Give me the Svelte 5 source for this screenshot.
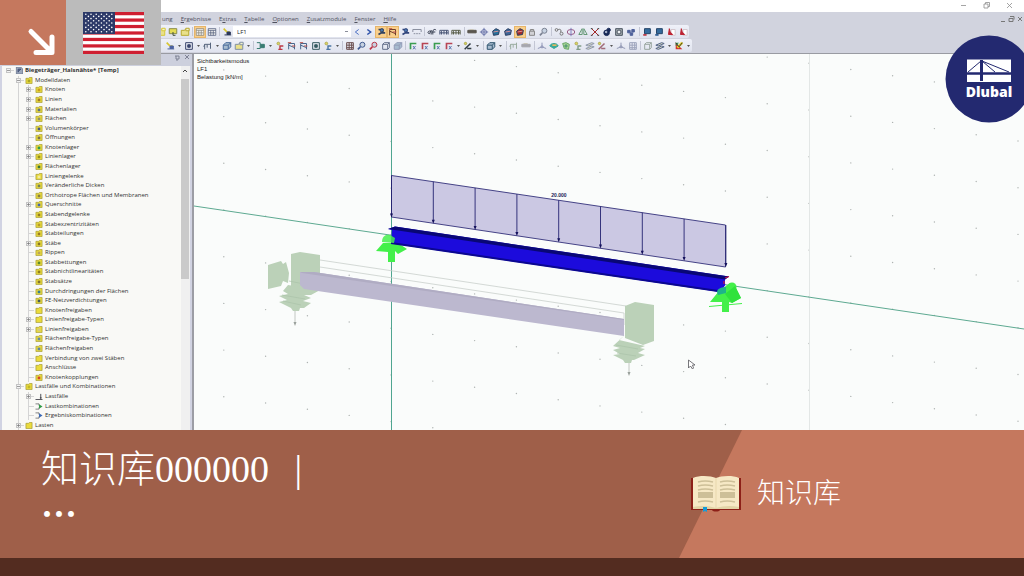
<script lang="ts">
	type Tool = { kind: string; color?: string; active?: boolean; label?: string };
	type Entry = Tool | 'caret' | 'sep' | 'gap' | 'combo';

	const t = (kind: string, color = '#4d5878', active = false): Tool => ({ kind, color, active });

	const menus = ['ung', 'Ergebnisse', 'Extras', 'Tabelle', 'Optionen', 'Zusatzmodule', 'Fenster', 'Hilfe'];

	const standardBar: Entry[] = [
		t('folder', '#d7c93a'), t('note'), t('folder', '#b9a92f'), 'sep',
		t('table', '#8a8578', true), t('table'), 'sep',
		t('load', '#2b3658'), 'combo',
		t('prev', '#4a6fc4'), t('next', '#2c50a8'),
		t('member', '#33425f', true), t('frame', '#6c3d2a', true), t('member', '#31457c'), t('values', '#8b90a0'), 'sep',
		t('curve', '#3b4254'), t('bridge'), t('bridge', '#5b604c'), 'gap',
		t('bar', '#5a564e'), t('target', '#6d77ab'), t('solid', '#27719b'), t('solid', '#3a6599'),
		t('solid', '#a32a2a', true), t('lock', '#888'), t('zoom', '#7b8292'), 'sep',
		t('link', '#777'), t('ring', '#9a5c86'), t('mirror', '#697'), t('cross', '#a32828'),
		t('ball', '#182957'), t('gear', '#4c5662'), t('cluster', '#50629b'), 'gap',
		t('screen', '#b62f3c'), t('screen', '#24558f'), t('flag', '#bd2433'), t('flag', '#bd2433')
	];

	const viewBar: Entry[] = [
		t('load', '#4c62a0'), 'caret', t('square', '#3b466e'), 'caret', t('beam', '#57657d'), 'caret',
		t('cube', '#486a9b'), t('folder', '#8090a6'), 'caret', 'sep',
		t('combine', '#397c72'), 'caret', t('pin', '#bd3744'), t('frame', '#48668c'), t('frame', '#48668c'),
		t('square', '#355a60'), t('pin', '#4a75a3'), 'caret', 'sep',
		t('mesh', '#6b4f4f'), t('zoom', '#405a90'), t('zoom', '#ba3446'), t('box', '#65708b'), t('cube', '#929bb7'), 'sep',
		t('axes', '#3a9d50'), t('axes', '#b84454'), t('axes', '#3a9d50'), t('axes', '#b84454'), 'caret',
		t('pencil', '#303c44'), 'caret', 'gap', t('cube', '#315670'), 'caret', 'gap',
		t('beam', '#9bada0'), t('bar', '#a6a6ad'), 'gap',
		t('node', '#9298b8'), t('dome', '#39a99b'), t('shell', '#67a766'), t('pin', '#809c88'),
		t('layers', '#919aae'), t('pencil', '#a16b79'), 'caret', t('node', '#9399b5'), t('mesh', '#9ea5bd'), 'sep',
		t('box', '#9aa7a0'), t('layers', '#546587'), 'caret', t('palette', '#cf3333'), 'caret'
	];

	interface Row { name: string; level: number; toggle?: '+' | '−'; mark?: string; kind?: string }

	const tree: Row[] = [
		{ name: 'Biegeträger_Halsnähte* [Temp]', level: 0, toggle: '−', kind: 'model' },
		{ name: 'Modelldaten', level: 1, toggle: '−', mark: '#a9a526' },
		{ name: 'Knoten', level: 2, toggle: '+', mark: '#c79b21' },
		{ name: 'Linien', level: 2, toggle: '+', mark: '#a07b28' },
		{ name: 'Materialien', level: 2, toggle: '+', mark: '#5f7180' },
		{ name: 'Flächen', level: 2, toggle: '+', mark: '#8f9268' },
		{ name: 'Volumenkörper', level: 2, mark: '#455784' },
		{ name: 'Öffnungen', level: 2, mark: '#78724f' },
		{ name: 'Knotenlager', level: 2, toggle: '+', mark: '#2d994c' },
		{ name: 'Linienlager', level: 2, toggle: '+', mark: '#93901e' },
		{ name: 'Flächenlager', level: 2, mark: '#37733c' },
		{ name: 'Liniengelenke', level: 2, mark: '#efeaa3' },
		{ name: 'Veränderliche Dicken', level: 2, mark: '#73805d' },
		{ name: 'Orthotrope Flächen und Membranen', level: 2, mark: '#867e48' },
		{ name: 'Querschnitte', level: 2, toggle: '+', mark: '#4465b0' },
		{ name: 'Stabendgelenke', level: 2, mark: '#927d23' },
		{ name: 'Stabexzentrizitäten', level: 2, mark: '#b49b2b' },
		{ name: 'Stabteilungen', level: 2, mark: '#9a7b24' },
		{ name: 'Stäbe', level: 2, toggle: '+', mark: '#877525' },
		{ name: 'Rippen', level: 2, mark: '#b8a35d' },
		{ name: 'Stabbettungen', level: 2, mark: '#5f8a2c' },
		{ name: 'Stabnichtlinearitäten', level: 2, mark: '#8d7e20' },
		{ name: 'Stabsätze', level: 2, mark: '#7f7230' },
		{ name: 'Durchdringungen der Flächen', level: 2, mark: '#397d8f' },
		{ name: 'FE-Netzverdichtungen', level: 2, mark: '#435a5c' },
		{ name: 'Knotenfreigaben', level: 2 },
		{ name: 'Linienfreigabe-Typen', level: 2, toggle: '+' },
		{ name: 'Linienfreigaben', level: 2, toggle: '+', mark: '#d2c884' },
		{ name: 'Flächenfreigabe-Typen', level: 2, mark: '#668aa3' },
		{ name: 'Flächenfreigaben', level: 2, mark: '#5b83a5' },
		{ name: 'Verbindung von zwei Stäben', level: 2 },
		{ name: 'Anschlüsse', level: 2 },
		{ name: 'Knotenkopplungen', level: 2, mark: '#d1452b' },
		{ name: 'Lastfälle und Kombinationen', level: 1, toggle: '−', mark: '#c1b826' },
		{ name: 'Lastfälle', level: 2, toggle: '+', kind: 'case' },
		{ name: 'Lastkombinationen', level: 2, mark: '#2f9a46', kind: 'combo' },
		{ name: 'Ergebniskombinationen', level: 2, mark: '#3b69b5', kind: 'combo' },
		{ name: 'Lasten', level: 1, toggle: '+' }
	];

	// work plane raster, skewed along the x axis
	const raster: { x: number; y: number }[] = [];
	for (let i = -9; i <= 10; i++) {
		for (let k = -3; k <= 9; k++) {
			const y = 79 + i * 6.2 + k * 46.7;
			if (y > 55 && y < 430) raster.push({ x: 600 + i * 41.8, y });
		}
	}

	const arrows = Array.from({ length: 9 }, (_, i) => ({ x: 391.5 + i * 41.8, y: 175.5 + i * 6.2 }));

	// nine rows, alternating six and five stars
	const stars: { x: number; y: number }[] = [];
	for (let r = 0; r < 9; r++) {
		const count = r % 2 ? 5 : 6;
		for (let c = 0; c < count; c++) {
			stars.push({ x: (r % 2 ? 5.4 : 2.8) + c * 5.2, y: 2.2 + r * 2.2 });
		}
	}
</script>

{#snippet glyph(kind: string, color: string)}
	<svg class="glyph" viewBox="0 0 12 12" fill="none" stroke={color} stroke-width="1.2" aria-hidden="true">
		{#if kind === 'folder'}
			<path d="M1.5 4h4l1-1.5h4V10h-9z" fill="#e9e08a" /><path d="M7 1.5h4v3H7z" fill="#f4f3cf" />
		{:else if kind === 'note'}
			<path d="M1.5 2h9v6h-9z" fill="#e4dc56" stroke="#8b8f4c" /><path d="M6 6v4h3" stroke="#47543d" />
		{:else if kind === 'table'}
			<path d="M1.5 2h9v8h-9zM1.5 4h9M4.5 4v6M7.5 4v6M2 7h8" fill="#f4f4f2" stroke-width=".9" />
		{:else if kind === 'load'}
			<path d="M2 2l4 4M8 5v4" stroke="#d7c530" stroke-width="2" /><path d="M3 9.5h8M6 6h4v3H6z" fill={color} />
		{:else if kind === 'prev'}
			<path d="M8 3L4 6l4 3" />
		{:else if kind === 'next'}
			<path d="M4 3l4 3-4 3" stroke-width="1.8" />
		{:else if kind === 'member'}
			<path d="M3 3h5v3L3 9M6 7h5" stroke-width="2" /><circle cx="7" cy="4" r="2" fill="#4a78ae" />
		{:else if kind === 'frame'}
			<path d="M2 10V3h7v7M2 5l7 3" /><path d="M1 2h4M6 6h4" stroke="#c1564e" />
		{:else if kind === 'values'}
			<path d="M1 3h10M1 3v3M11 3v3M2 8h2M5 8h2M8 8h2" />
		{:else if kind === 'curve'}
			<path d="M4 5c-3-1-4 3-1 3l2-4v5M7 9V5c0-2 3-3 4-1M6 6h4" />
		{:else if kind === 'link'}
			<circle cx="3" cy="3.5" r="1.6" /><path d="M5 3c3-1 4 1 3 3" /><circle cx="9" cy="8" r="1.8" />
		{:else if kind === 'bridge'}
			<path d="M1 9V4h10v5M1 7h10M3 5v4M6 4v5M9 4v5" />
		{:else if kind === 'bar'}
			<path d="M1 4h10v3H1z" fill={color} /><path d="M3 3h5" stroke="#c8c4b7" />
		{:else if kind === 'target'}
			<circle cx="6" cy="6" r="3" /><path d="M6 1v10M1 6h10" />
		{:else if kind === 'solid'}
			<path d="M2 5l4-3 4 2-1 5-6 1z" fill={color} stroke="#273c61" /><path d="M3 6l6-1" stroke="#d78f94" />
		{:else if kind === 'lock'}
			<path d="M3 5h6v5H3zM4 5V3h4v2" fill="#d1d1d5" />
		{:else if kind === 'zoom'}
			<circle cx="6.5" cy="4.5" r="3" fill="#c7d2e1" /><path d="M4 7l-3 3" stroke-width="2" />
		{:else if kind === 'ring'}
			<ellipse cx="6" cy="6" rx="4.5" ry="3" /><path d="M6 1v10" stroke="#8080bf" />
		{:else if kind === 'mirror'}
			<path d="M5 2v7H1zM7 2v7h4z" />
		{:else if kind === 'cross'}
			<path d="M2 2l8 8M10 2l-8 8" /><path d="M1 2h2M9 2h2M1 10h2M9 10h2" stroke="#393939" />
		{:else if kind === 'ball'}
			<circle cx="5.5" cy="7" r="3.3" fill={color} /><circle cx="8" cy="3.5" r="2" fill={color} /><circle cx="5" cy="6" r=".9" stroke="#d5def0" />
		{:else if kind === 'gear'}
			<path d="M2 2h8v8H2z" fill="#a3abb0" /><circle cx="6" cy="6" r="2.4" fill="#eceef1" />
		{:else if kind === 'cluster'}
			<path d="M2 4h3v3H2zM7 3h3v3H7zM5 7h3v3H5z" fill={color} />
		{:else if kind === 'screen'}
			<path d="M3 2h7v6H3z" fill="#356b9d" stroke="#264569" /><path d="M1.5 9.5h4" stroke={color} stroke-width="2" />
		{:else if kind === 'flag'}
			<path d="M6 3h5v7H6z" fill="#fff" stroke="#d4c7ce" /><path d="M4 2l1 4 3 3H3z" fill={color} />
		{:else if kind === 'square'}
			<path d="M2 2h8v8H2z" /><path d="M4.5 4.5h3v3h-3z" fill={color} />
		{:else if kind === 'beam'}
			<path d="M2 10V4h7v5M9 2v7M2 4l-1 3M5 4v4" />
		{:else if kind === 'cube'}
			<path d="M1.5 5l3-3h6v5l-3 3h-6z" fill="#a7bbcf" /><path d="M1.5 5h6l3-3M7.5 5v5" />
		{:else if kind === 'combine'}
			<path d="M1 2h4v2M1 9h4V8" /><path d="M5 4h5v4H5z" fill={color} />
		{:else if kind === 'pin'}
			<path d="M6 5v5M4 10h5M6 6h4" stroke-width="1.7" /><circle cx="4" cy="3" r="1.6" fill="#dfd65a" stroke="#b1ac58" />
		{:else if kind === 'mesh'}
			<path d="M2 2h8v8H2zM2 5h8M2 8h8M5 2v8M8 2v8" />
		{:else if kind === 'box'}
			<path d="M2 4h6v6H2zM4 2h6v6M2 4l2-2M8 4l2-2M8 10l2-2" />
		{:else if kind === 'axes'}
			<path d="M3 10V3h7" stroke-width="2" /><path d="M6 6l3 4M9 6l-3 4" stroke="#5c77ad" />
		{:else if kind === 'pencil'}
			<path d="M2 10l7-7M5 9h5" stroke-width="1.8" /><circle cx="3" cy="3" r="1.4" fill="#dad65b" stroke="#aaa64b" />
		{:else if kind === 'node'}
			<path d="M6 2v6M1 9l5-2 5 2" /><circle cx="6" cy="7" r="1.3" />
		{:else if kind === 'dome'}
			<path d="M1 6c1-4 9-4 10 0L6 9z" fill={color} /><path d="M4 5h5" stroke="#e2b85d" stroke-width="2" />
		{:else if kind === 'shell'}
			<path d="M2 3l4-1 4 2-1 6-5-1z" fill="#a9d49b" /><circle cx="6" cy="6" r="1.5" fill="#478da4" />
		{:else if kind === 'layers'}
			<path d="M1 5l7-3 3 1-7 3zM1 9l7-3 3 1-7 3z" fill="#d3d5c0" />
		{:else if kind === 'palette'}
			<path d="M2 2v8h8z" fill={color} stroke="none" /><path d="M2 2h4L2 6z" fill="#35964e" stroke="none" /><path d="M4 8l6-6" stroke="#e4ce2a" stroke-width="3" /><path d="M2 2l4 5 4-5" stroke="#383d31" />
		{/if}
	</svg>
{/snippet}

{#snippet toolbar(entries: Entry[], name: string)}
	<div class="toolbar" class:view={name === 'Ansicht'} role="toolbar" aria-label={name}>
		{#each entries as e, i (i)}
			{#if e === 'sep' || e === 'gap'}
				<span class={e}></span>
			{:else if e === 'caret'}
				<button class="caret" aria-label="Mehr"><svg viewBox="0 0 7 4"><path d="M2 1h3L3.5 3z" fill="#555" /></svg></button>
			{:else if e === 'combo'}
				<select class="case-select" aria-label="Lastfall"><option>LF1</option></select>
			{:else}
				<button class="tool" class:active={e.active} aria-label={e.kind}>{@render glyph(e.kind, e.color ?? '#555')}</button>
			{/if}
		{/each}
	</div>
{/snippet}

<main class="page">
	<section class="app">
		<header class="titlebar">
			<svg width="60" height="12" viewBox="0 0 60 12" fill="none" stroke="#8e8e8e" aria-hidden="true">
				<path d="M1 5.500h5M24 4h4v4h-4zM25.500 4V2.500h4v4H28M47 3l5 5M52 3l-5 5" stroke-width=".8" />
			</svg>
		</header>
		<nav class="menubar">
			{#each menus as m (m)}
				<a href="#{m}">{#if m === 'ung'}{m}{:else if m === 'Extras'}E<u>x</u>tras{:else}<u>{m[0]}</u>{m.slice(1)}{/if}</a>
			{/each}
			<svg class="mdi" width="24" height="12" viewBox="0 0 24 12" fill="none" stroke="#777" aria-hidden="true">
				<path d="M1 8.500h4M9 5.500h4v3H9zM10 3.500h4v3M18 4l4 4M22 4l-4 4" />
			</svg>
		</nav>
		<div class="bars">
			{@render toolbar(standardBar, 'Standard')}
			{@render toolbar(viewBar, 'Ansicht')}
		</div>

		<div class="workspace">
			<aside class="navigator">
				<div class="nav-head">
					<svg width="18" height="8" viewBox="0 0 18 8" fill="none" stroke="#777b8c" aria-hidden="true">
						<path d="M1 2h4M2 2v3h3V2M3 5v2M11 1l4 4M15 1l-4 4" stroke-width=".9" />
					</svg>
				</div>
				<div class="nav-body">
					<ul class="tree">
						{#each tree as row (row.name)}
							<li class:root={row.level === 0}>
								{#each Array(row.level) as _, i (i)}
									<span class="rail" class:line={i > 0}></span>
								{/each}
								<span class="joint" class:first={row.level === 0}>
									{#if row.toggle}
										<button class="toggle" aria-label={row.name}>
											<svg viewBox="0 0 5 5"><path d={row.toggle === '+' ? 'M1 2.500h3M2.500 1v3' : 'M1 2.500h3'} stroke="#777" stroke-width=".7" /></svg>
										</button>
									{/if}
								</span>
								<svg class="node" viewBox="0 0 8 8" aria-hidden="true">
									{#if row.kind === 'model'}
										<path d="M1 0h5l2 2v6H1z" fill="#9da8bc" stroke="#626e88" stroke-width=".8" /><path d="M3 6V2.500h3L3 5" fill="none" stroke="#2c3d66" />
									{:else if row.kind === 'case'}
										<path d="M0 7.500h8M6 1v6M5 5.500h2" fill="none" stroke="#36383f" />
									{:else if row.kind === 'combo'}
										<path d="M0 1h4v2M0 7h4V5" fill="none" stroke="#555" stroke-width=".8" /><path d="M4 1.500L8 4 4 6.500z" fill={row.mark} />
									{:else}
										<path d="M.5 1.500h3l1-1h3v7h-7z" fill="#eadb3c" stroke="#a39a35" stroke-width=".8" />
										{#if row.mark}<path d="M2.500 3h3v3h-3z" fill={row.mark} />{/if}
									{/if}
								</svg>
								<span class="name">{row.name}</span>
							</li>
						{/each}
					</ul>
					<div class="scroll">
						<svg width="8" height="8" viewBox="0 0 8 8" aria-hidden="true"><path d="M2 6l2-2 2 2" fill="none" stroke="#444" /></svg>
						<span class="thumb"></span>
					</div>
				</div>
			</aside>

			<div class="viewport">
				<p class="info">Sichtbarkeitsmodus<br />LF1<br />Belastung [kN/m]</p>
				<svg class="scene" viewBox="194 54 830 376" preserveAspectRatio="xMinYMin slice" role="img" aria-label="Modell">
					{#each raster as p (p)}
						<circle cx={p.x} cy={p.y} r=".7" fill="#aeb3b1" />
					{/each}
					<path d="M809.500 54v376" stroke="#e3e7e6" />
					<path d="M194 206L1024 329" stroke="#5da991" />
					<path d="M391.500 54v376" stroke="#4fa590" />

					<g stroke="#c9cfcb" stroke-width=".8" fill="none">
						<path d="M320 260L626 306M320 267L624 313v12" />
						<path d="M295 311v13M629 361v13" stroke="#b4bab5" />
					</g>
					<path d="M293.500 322h3l-1.500 4zM627.500 372h3l-1.500 4z" fill="#9aa19c" />
					<g fill="#bbd1b8">
						<path d="M268 265l13-4 2 3 3-2 3 11-1 10-5-2-2 5-13 3z" />
						<path d="M291 254l9-2 20 3v35l-9 5h-20z" />
						<path d="M288 285l32 5-9 4-7 1 7 3-8 3 8 2-7 5h-4l-1 3h-6l-2-3-12-6 8-2-8-4 9-2-5-3z" />
						<path d="M625 306l10-4 19 3v36l-11 4-18-7z" />
						<path d="M625 335l-6 5 26 6-5 2 5 1-7 4 7 2-11 5h-2l-1 3h-6l-2-3-10-5 7-1-7-4 7-2-7-2z" />
					</g>
					<path d="M289 281l15 3M282 295l23 4M283 301l18 4M616 345l22 4M617 353l19 3" stroke="#aac3a9" stroke-width=".7" />
					<path d="M300 272h14l310 47v17L304 289l-4-4z" fill="#bcb8cf" />
					<path d="M300 272h14l310 47v1L302 273z" fill="#b0acc3" />

					<path d="M391.500 175.500L725.500 225v42L391.500 217z" fill="#cbc8e3" stroke="#33317b" stroke-width=".9" />
					{#each arrows as a (a.x)}
						<path d="M{a.x} {a.y}v40" stroke="#242270" stroke-width=".9" />
						<path d="M{a.x - 1.5} {a.y + 38}h3l-1.500 4z" fill="#15125c" />
					{/each}
					<text x="559" y="197" text-anchor="middle" class="load-value">20.000</text>

					<g fill="#43f04a">
						<path d="M376 251l7-8h15l9 6-9 5-3-3v11h-7V252z" />
						<path d="M710 302l9-11 11-8 6 5 5 10-9 5-3-1v10h-7v-10z" />
						<path d="M709 306.500l33-3" stroke="#43f04a" />
						<circle cx="732" cy="287" r="4.500" />
					</g>
					<path d="M725 294l10-8 6 12-9 5z" fill="#2fe23c" />
					<path d="M388 229l7-2.500 334 50-4 3v6l-5 6.500-329-48.500 1-13.500z" fill="#1c0bdc" />
					<path d="M388 229l7-2.500 334 50-4 3z" fill="#090775" />
					<path d="M391 243l327 48" stroke="#0b0790" stroke-width="2" />
					<path d="M725 278l4-1.500M724 284v-3" stroke="#c71543" stroke-width="1.200" />
					<path d="M382 242c0-5 3-8 8-7l5 3-1 5z" fill="#43f04a" opacity=".85" />
					<path d="M717 292c0-4 6-5 9-5v6l-8 2z" fill="#1eb48b" />
					<path d="M688.500 360v8l2-2 2 3 1-1-1-3h2.500z" fill="#fff" stroke="#55565b" stroke-width=".8" />
				</svg>
			</div>
		</div>

		<div class="badges">
			<div class="corner">
				<svg width="66" height="66" viewBox="0 0 66 66" fill="none" stroke="#fff" stroke-width="5" stroke-linecap="round" stroke-linejoin="round" aria-hidden="true">
					<path d="M31 31.500l20 20M52 37v15.500H36" />
				</svg>
			</div>
			<div class="flag">
				<svg width="61" height="42" viewBox="0 0 61 42" aria-label="English">
					<rect width="61" height="42" fill="#fff" />
					{#each Array(7) as _, i (i)}
						<rect y={i * 6.46} width="61" height="3.23" fill="#cf1f31" />
					{/each}
					<rect width="32" height="22" fill="#2c3968" />
					{#each stars as s, i (i)}
						<circle cx={s.x} cy={s.y} r=".8" fill="#fff" />
					{/each}
				</svg>
			</div>
		</div>

		<svg class="logo" width="79" height="88" viewBox="945 35 79 88" aria-label="Dlubal">
			<circle cx="989" cy="79" r="43.500" fill="#232970" />
			<path d="M967 59.500h44v22.500h-44z" fill="#fff" />
			<path d="M967 73.500h44" stroke="#232970" stroke-width="2.500" />
			<path d="M981.500 60v21" stroke="#232970" stroke-width="3" />
			<path d="M968 72l13-11M982 61l13 11M982 61l27 11" stroke="#232970" fill="none" />
			<text x="989" y="97" text-anchor="middle" class="logo-text">Dlubal</text>
		</svg>
	</section>

	<section class="banner" lang="zh-CN">
		<div class="headline">
			<h1>知识库000000 <span class="bar">|</span></h1>
			<p class="dots">…</p>
		</div>
		<div class="category">
			<svg width="50" height="36" viewBox="0 0 50 36" aria-hidden="true">
				<path d="M0 2h50v32H29c-1 2-7 2-8 0H0z" fill="#8d2018" />
				<path d="M2 2C9-1 20 0 25 2c5-2 16-3 23 0v31H2z" fill="#f6e8c5" />
				<path d="M25 2v30" stroke="#e8d7ad" />
				<path d="M2 31c8-2 17-1 23 1 6-2 15-3 23-1v2H2z" fill="#e2d3a6" />
				<path d="M7 16h15v6H7zM29 16h15v6H29z" fill="#cdbf98" />
				<path d="M7 6q7-2 15 0M7 10q7-2 15 0M7 14q7-2 15 0M7 26q7-2 15 0M29 6q7-2 15 0M29 10q7-2 15 0M29 14q7-2 15 0M29 26q7-2 15 0" fill="none" stroke="#cdbf98" stroke-width="1.500" />
				<path d="M12 31h4v5l-2-1-2 1z" fill="#159bd7" />
			</svg>
			<span class="category-name">知识库</span>
		</div>
	</section>
	<footer></footer>
</main>

<style>
	:global(body) { overflow: hidden; }

	.page {
		display: flex;
		flex-direction: column;
		height: 100vh;
		font-family: "Open Sans", "Noto Sans", sans-serif;
		font-size: 6px;
		color: #333;
	}
	button {
		padding: 0;
		border: 0;
		background: none;
	}

	.app {
		position: relative;
		flex: 1;
		min-height: 0;
		display: flex;
		flex-direction: column;
		background: #d1d3de;
	}
	.titlebar {
		display: flex;
		justify-content: flex-end;
		height: 12px;
		padding-right: 4px;
		background: #fff;
	}
	.menubar {
		display: flex;
		align-items: center;
		gap: 8px;
		height: 13px;
		padding-left: 162px;
		line-height: 8px;
	}
	.menubar a {
		color: #50525e;
		text-decoration: none;
	}
	.mdi { margin-left: auto; }

	.bars {
		display: flex;
		flex-direction: column;
		align-items: flex-start;
		gap: 1px;
		padding-bottom: 1px;
		border-bottom: 1px solid #999ba2;
	}
	.toolbar {
		display: flex;
		align-items: center;
		height: 13px;
		padding-left: 155px;
		border-radius: 0 2px 2px 0;
		background: linear-gradient(#eff1f9, #e0e3ee);
	}
	.toolbar.view { padding-left: 164px; }
	.tool {
		display: grid;
		place-items: center;
		width: 12px;
		height: 12px;
	}
	.tool.active {
		background: #f9cf8c;
		box-shadow: inset 0 0 0 1px #e6b56a;
	}
	.glyph {
		width: 10px;
		height: 10px;
	}
	.caret {
		display: grid;
		place-items: center;
		width: 7px;
		height: 12px;
	}
	.caret svg { width: 7px; height: 4px; }
	.sep, .gap {
		width: 3px;
		height: 9px;
		background: linear-gradient(#c3c6d4, #c3c6d4) center / 1px 100% no-repeat;
	}
	.gap { width: 4px; }
	.case-select {
		width: 118px;
		height: 11px;
		padding: 0 4px;
		border: 0;
		appearance: none;
		background: linear-gradient(#8b8e9a, #8b8e9a) right 3px center / 3px 1px no-repeat, #fff;
		font: inherit;
		color: #222;
	}

	.workspace {
		flex: 1;
		min-height: 0;
		display: flex;
	}
	.navigator {
		display: flex;
		flex-direction: column;
		width: 194px;
		box-sizing: border-box;
		border-left: 2px solid #d1d3e2;
		border-right: 2px solid #9c9da5;
		background: #d1d3e2;
	}
	.nav-head {
		display: flex;
		justify-content: flex-end;
		align-items: flex-start;
		height: 12px;
		background: #cdd0dd;
	}
	.nav-body {
		flex: 1;
		min-height: 0;
		display: flex;
		margin-right: 2px;
		background: #f9f9f6;
	}
	.tree {
		flex: 1;
		display: grid;
		grid-auto-rows: minmax(0, 1fr);
		margin: 0;
		padding: 0 0 0 3px;
		list-style: none;
	}
	.tree li {
		display: flex;
		align-items: center;
		min-height: 0;
		line-height: 9px;
		white-space: nowrap;
	}
	.tree .root { font-weight: 700; }
	.rail, .joint {
		align-self: stretch;
		width: 10px;
	}
	.rail.line {
		background: linear-gradient(#d4d4d4, #d4d4d4) 3px 0 / 1px 100% no-repeat;
	}
	/* second-level rows keep the first-level line running past them */
	.rail:has(+ .joint) {
		background: linear-gradient(#d4d4d4, #d4d4d4) 3px 0 / 1px 100% no-repeat;
	}
	.rail:first-child:has(+ .joint) { background: none; }
	.joint {
		display: flex;
		align-items: center;
		background:
			linear-gradient(#d4d4d4, #d4d4d4) 3px 0 / 1px 100% no-repeat,
			linear-gradient(#d4d4d4, #d4d4d4) 3px 50% / 6px 1px no-repeat;
	}
	.joint.first { background: linear-gradient(#d4d4d4, #d4d4d4) 3px 50% / 6px 1px no-repeat; }
	.toggle {
		display: grid;
		margin-left: 1px;
		width: 5px;
		height: 5px;
		background: #f3f3f3;
		outline: 1px solid #c4c4c4;
		outline-offset: -1px;
	}
	.toggle svg { width: 5px; height: 5px; }
	.node {
		width: 8px;
		height: 7px;
		margin-right: 2px;
	}
	.scroll {
		display: flex;
		flex-direction: column;
		width: 9px;
		background: #f0f0f0;
	}
	.scroll svg { margin-bottom: 5px; }
	.thumb {
		width: 8px;
		height: 55%;
		background: #cacaca;
	}

	.viewport {
		position: relative;
		flex: 1;
		min-width: 0;
		overflow: hidden;
		background: #fafcfb;
	}
	.scene {
		display: block;
		width: 100%;
		height: 100%;
	}
	.info {
		position: absolute;
		top: 3px;
		left: 3px;
		margin: 0;
		font-family: "Liberation Sans", Arial, sans-serif;
		line-height: 8px;
		color: #222;
	}
	.load-value {
		font: 700 5px "Liberation Sans", Arial, sans-serif;
		fill: #1c1a55;
	}

	.badges {
		position: absolute;
		top: 0;
		left: 0;
		display: flex;
	}
	.corner, .flag {
		display: grid;
		place-items: center;
		height: 65px;
		background: #c5785e;
		overflow: hidden;
	}
	.flag {
		width: 95px;
		background: #bbb;
	}
	.logo {
		position: absolute;
		top: 35px;
		right: 0;
	}
	.logo-text {
		font: 800 14px "Open Sans", "Noto Sans", sans-serif;
		fill: #fff;
	}

	.banner {
		display: grid;
		grid-template-columns: 679fr 345fr;
		height: 128px;
		background: #9f5f49;
		color: #fff;
		font-family: "Liberation Serif", "Noto Sans CJK SC", serif;
		font-weight: 300;
	}
	.headline { padding: 16px 0 0 41px; }
	h1 {
		margin: 0;
		font-size: 38px;
		font-weight: 300;
		line-height: 46px;
	}
	.bar { margin-left: 16px; }
	.dots {
		margin: 0;
		font-family: "Noto Sans CJK SC", sans-serif;
		font-size: 36px;
		font-weight: 700;
		line-height: 40px;
	}
	.category {
		position: relative;
		display: flex;
		align-items: center;
		gap: 16px;
		padding-left: 12px;
	}
	.category::before {
		content: "";
		position: absolute;
		inset: 0;
		background: #c5785e;
		clip-path: polygon(63px 0, 100% 0, 100% 100%, 0 100%);
	}
	.category > * { position: relative; }
	.category-name {
		padding-bottom: 6px;
		font-size: 28px;
	}

	footer {
		height: 18px;
		background: #532c20;
	}
</style>
